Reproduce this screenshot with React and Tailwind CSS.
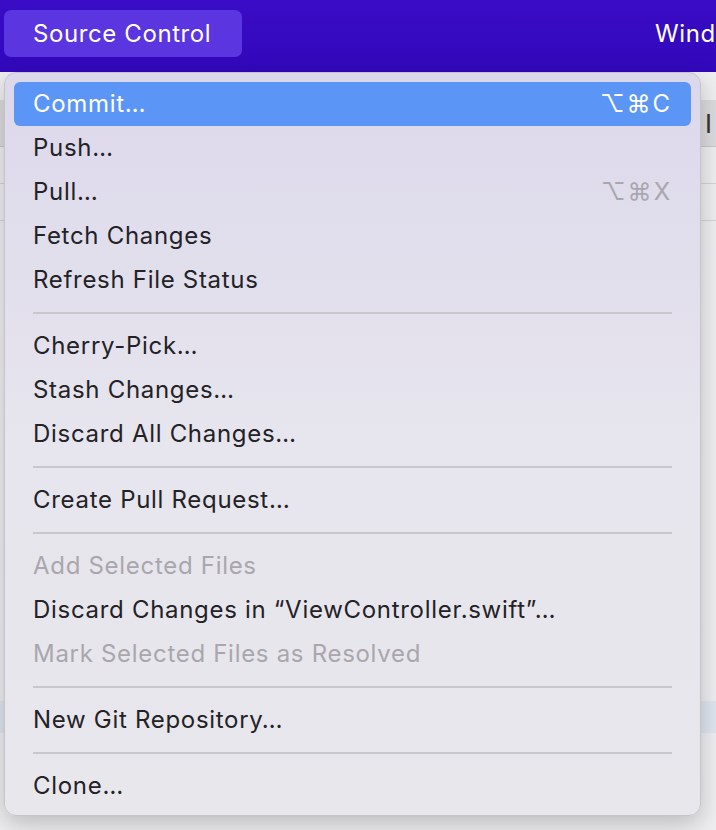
import React from "react";

const items = [
  { t: "Commit…", k: "⌥⌘C", active: true },
  { t: "Push…" },
  { t: "Pull…", k: "⌥⌘X", kDim: true },
  { t: "Fetch Changes" },
  { t: "Refresh File Status" },
  "sep",
  { t: "Cherry-Pick…" },
  { t: "Stash Changes…" },
  { t: "Discard All Changes…" },
  "sep",
  { t: "Create Pull Request…" },
  "sep",
  { t: "Add Selected Files", dis: true },
  { t: "Discard Changes in “ViewController.swift”…" },
  { t: "Mark Selected Files as Resolved", dis: true },
  "sep",
  { t: "New Git Repository…" },
  "sep",
  { t: "Clone…" },
];

export default function App() {
  return (
    <div
      className="relative w-[716px] h-[830px] overflow-hidden bg-[#efeff1]"
      style={{ fontFamily: "Inter, 'Noto Sans', sans-serif" }}
    >
      {/* menu bar */}
      <div className="h-[72px] bg-gradient-to-b from-[#3a0cc6] to-[#3208bb] flex items-start pt-[10px] pl-[4px]">
        <div className="h-[47px] w-[238px] rounded-[7px] bg-[#5a35e0] flex items-center pl-[29px] text-white text-[24px] tracking-[0.6px]">
          Source Control
        </div>
        <div className="ml-[413px] text-white text-[24px] tracking-[0.6px] h-[47px] flex items-center whitespace-nowrap">
          Wind
        </div>
      </div>

      {/* background window behind */}
      <div className="flex flex-col">
        <div className="h-[28px]" />
        <div className="h-[47px] bg-[#dcdcde] border-b border-[#c9c9cc] flex items-center justify-end pr-[4px] text-[26px] text-[#333]">
          y I
        </div>
        <div className="h-[37px] border-b border-[#d4d4d6]" />
        <div className="h-[37px] border-b border-[#d4d4d6]" />
        <div className="h-[480px]" />
        <div className="h-[32px] bg-[#dfe6f0]" />
      </div>

      {/* dropdown menu */}
      <div className="absolute left-[4px] top-[72px] w-[697px] rounded-[12px] border border-[#c6c4cb] bg-gradient-to-b from-[#dcd8ec] via-[#e7e5ed] to-[#e8e7ec] shadow-[0_8px_24px_rgba(0,0,0,0.22)] pt-[9px] pb-[7px] px-[9px]">
        {items.map((it, i) =>
          it === "sep" ? (
            <div key={i} className="h-[22px] flex items-center px-[19px]">
              <div className="h-[2px] w-full bg-[#c9c7ce]" />
            </div>
          ) : (
            <div
              key={i}
              className={
                "h-[44px] rounded-[6px] flex items-center justify-between pl-[19px] pr-[19px] text-[24px] " +
                (it.active
                  ? "bg-[#5b96f6] text-white"
                  : it.dis
                  ? "text-[#a9a7ad]"
                  : "text-[#232226]")
              }
            >
              <span className="tracking-[0.7px]">{it.t}</span>
              {it.k && (
                <span
                  className={
                    "tracking-[2px] " + (it.kDim ? "text-[#a9a7ad]" : "")
                  }
                >
                  {it.k}
                </span>
              )}
            </div>
          )
        )}
      </div>
    </div>
  );
}
